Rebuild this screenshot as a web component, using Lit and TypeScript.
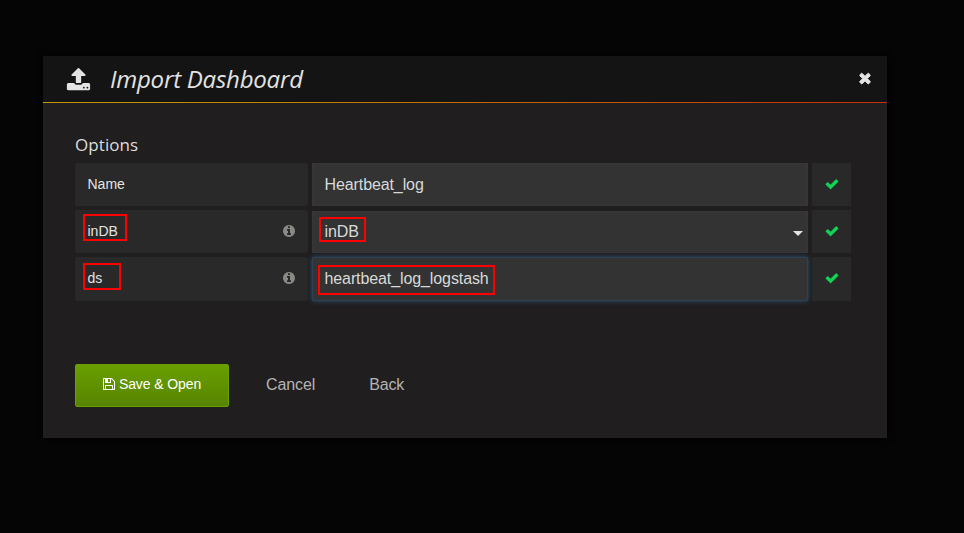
import { LitElement, html, css, svg, nothing } from "lit";
import { customElement, property } from "lit/decorators.js";

const ICONS: Record<string, string> = {
  upload:
    "M1344 1472q0-26-19-45t-45-19-45 19-19 45 19 45 45 19 45-19 19-45zm256 0q0-26-19-45t-45-19-45 19-19 45 19 45 45 19 45-19 19-45zm128-224v320q0 40-28 68t-68 28h-1472q-40 0-68-28t-28-68v-320q0-40 28-68t68-28h427q21 56 70.5 92t110.5 36h256q61 0 110.5-36t70.5-92h427q40 0 68 28t28 68zm-325-648q-17 40-59 40h-256v448q0 26-19 45t-45 19h-256q-26 0-45-19t-19-45v-448h-256q-42 0-59-40-17-39 14-69l448-448q18-19 45-19t45 19l448 448q31 30 14 69z",
  save:
    "M512 1536h768v-384h-768v384zm896 0h128v-896q0-14-10-38.5t-20-34.5l-281-281q-10-10-34-20t-39-10v416q0 40-28 68t-68 28h-576q-40 0-68-28t-28-68v-416h-128v1280h128v-416q0-40 28-68t68-28h832q40 0 68 28t28 68v416zm-384-928v-320q0-13-9.5-22.5t-22.5-9.5h-192q-13 0-22.5 9.5t-9.5 22.5v320q0 13 9.5 22.5t22.5 9.5h192q13 0 22.5-9.5t9.5-22.5zm640 32v928q0 40-28 68t-68 28h-1344q-40 0-68-28t-28-68v-1344q0-40 28-68t68-28h928q40 0 88 20t76 48l280 280q28 28 48 76t20 88z",
  info:
    "M1152 1376v-160q0-14-9-23t-23-9h-96v-512q0-14-9-23t-23-9h-320q-14 0-23 9t-9 23v160q0 14 9 23t23 9h96v320h-96q-14 0-23 9t-9 23v160q0 14 9 23t23 9h448q14 0 23-9t9-23zm-128-896v-160q0-14-9-23t-23-9h-192q-14 0-23 9t-9 23v160q0 14 9 23t23 9h192q14 0 23-9t9-23zm640 416q0 209-103 385.5t-279.5 279.5-385.5 103-385.5-103-279.5-279.5-103-385.5 103-385.5 279.5-279.5 385.5-103 385.5 103 279.5 279.5 103 385.5z",
  check:
    "M1671 566q0 40-28 68l-724 724-136 136q-28 28-68 28t-68-28l-136-136-362-362q-28-28-28-68t28-68l136-136q28-28 68-28t68 28l294 295 656-657q28-28 68-28t68 28l136 136q28 28 28 68z",
  times:
    "M1490 1322q0 40-28 68l-136 136q-28 28-68 28t-68-28l-294-294-294 294q-28 28-68 28t-68-28l-136-136q-28-28-28-68t28-68l294-294-294-294q-28-28-28-68t28-68l136-136q28-28 68-28t68 28l294 294 294-294q28-28 68-28t68 28l136 136q28 28 28 68t-28 68l-294 294 294 294q28 28 28 68z",
};

@customElement("ui-icon")
class UiIcon extends LitElement {
  @property() name = "check";

  static styles = css`
    :host {
      display: block;
      flex: none;
      width: 14px;
      height: 14px;
    }
    .glyph {
      display: block;
      width: 100%;
      height: 100%;
      fill: currentColor;
      stroke: currentColor;
      stroke-width: var(--icon-stroke, 0);
      overflow: visible;
    }
  `;

  render() {
    return html`<svg class="glyph" viewBox="0 0 1792 1792">
      ${svg`<path d=${ICONS[this.name]}></path>`}
    </svg>`;
  }
}

@customElement("option-row")
class OptionRow extends LitElement {
  @property() label = "";
  @property() value = "";
  @property() kind = "text";
  @property({ type: Boolean }) hint = false;
  @property({ type: Boolean }) marked = false;

  static styles = css`
    :host {
      display: grid;
      grid-template-columns: 233px 496px 39px;
      column-gap: 4px;
      height: 43px;
      font-family: "Liberation Sans", Arial, sans-serif;
    }
    .label,
    .field,
    .status {
      position: relative;
      display: flex;
      align-items: center;
      box-sizing: border-box;
      border-radius: 2px;
    }
    .label {
      justify-content: space-between;
      padding: 0 12px var(--row-lift, 1px) 12.5px;
      background: #292929;
      color: #e3e3e3;
      font-size: 14px;
    }
    .label ui-icon {
      color: #8a8986;
    }
    .field {
      justify-content: space-between;
      padding: 1px 5px 0 12.5px;
      background: #333;
      color: #d8d9da;
      font-size: 16px;
      letter-spacing: -0.1px;
      border-radius: 0;
      box-shadow: inset 0 0 3px 1px #393939;
    }
    .select {
      margin-top: 1px;
      padding: 0 5px 1px 12.5px;
    }
    .focus {
      padding: 0 5px 1px 12.5px;
      border-radius: 2px;
      box-shadow: inset 0 0 0 1px #2c4254, 0 0 5px #2f5478;
    }
    .caret {
      width: 0;
      border: 5px solid transparent;
      border-top-color: #e3e3e3;
      border-bottom: 0;
      margin-top: 3px;
    }
    .status {
      justify-content: center;
      padding-bottom: var(--row-lift, 1px);
      background: #292929;
      color: #10d658;
      border-radius: 0;
      --icon-stroke: 70;
    }
    .mark {
      position: absolute;
      box-sizing: border-box;
      border: 2px solid #f00;
    }
    .label-indb { left: 8px; top: 4px; width: 44px; height: 27px; }
    .field-indb { left: 7px; top: 6px; width: 47px; height: 25px; }
    .label-ds { left: 8px; top: 6px; width: 38px; height: 27px; }
    .field-ds { left: 6px; top: 8px; width: 177px; height: 30px; }
  `;

  render() {
    const key = this.label.toLowerCase();
    return html`
      <div class="label">
        <span>${this.label}</span>
        ${this.hint ? html`<ui-icon name="info"></ui-icon>` : nothing}
        ${this.marked ? html`<i class="mark label-${key}"></i>` : nothing}
      </div>
      <div class="field ${this.kind}">
        <span>${this.value}</span>
        ${this.kind === "select" ? html`<i class="caret"></i>` : nothing}
        ${this.marked ? html`<i class="mark field-${key}"></i>` : nothing}
      </div>
      <div class="status"><ui-icon name="check"></ui-icon></div>
    `;
  }
}

@customElement("app-root")
class AppRoot extends LitElement {
  static styles = css`
    :host {
      display: block;
      box-sizing: border-box;
      height: 533px;
      padding: 56px 0 0 43px;
      overflow: hidden;
      background: #050505;
      font-family: "Liberation Sans", Arial, sans-serif;
    }
    .modal {
      width: 844px;
      height: 382px;
      background: #201e1f;
      box-shadow: 0 0 6px #000;
    }
    .header {
      display: flex;
      align-items: center;
      box-sizing: border-box;
      height: 46px;
      padding: 0 14px 0 22.5px;
      background: #141414;
      color: #e3e3e3;
    }
    .upload {
      width: 25px;
      height: 25px;
    }
    .title {
      flex: 1;
      margin: 0 0 0 19.5px;
      font: italic 430 24px/46px "Open Sans", "Noto Sans", sans-serif;
      letter-spacing: -0.23px;
    }
    .close {
      width: 16px;
      height: 16px;
      margin-bottom: 2px;
      --icon-stroke: 90;
    }
    .rule {
      height: 1px;
      background: linear-gradient(to right, #c09c06, #c27d05 35%, #c4310a 99%);
    }
    .content {
      padding: 30px 32px 0;
    }
    .heading {
      margin: 0;
      color: #dcdddd;
      font: 450 17px/24px "Open Sans", "Noto Sans", sans-serif;
      letter-spacing: 0.08px;
    }
    .rows {
      display: grid;
      row-gap: 4px;
      padding-top: 6px;
    }
    .last {
      height: 44px;
      --row-lift: 2px;
    }
    .actions {
      display: flex;
      align-items: center;
      margin-top: 63px;
      height: 43px;
      color: #b3b3b3;
      font-size: 16px;
    }
    .save {
      display: flex;
      align-items: center;
      justify-content: center;
      gap: 3px;
      box-sizing: border-box;
      width: 154px;
      height: 43px;
      padding: 0 1px 3px 0;
      border: 1px solid #69a000;
      border-radius: 2px;
      background: linear-gradient(#699f00, #578400);
      color: #fff;
      font-size: 14px;
      letter-spacing: -0.1px;
    }
    .cancel {
      margin-left: 37px;
      padding-bottom: 2px;
      letter-spacing: -0.1px;
    }
    .back {
      margin-left: 54px;
      padding-bottom: 2px;
      letter-spacing: -0.15px;
    }
  `;

  render() {
    return html`
      <div class="modal">
        <div class="header">
          <ui-icon class="upload" name="upload"></ui-icon>
          <h2 class="title">Import Dashboard</h2>
          <ui-icon class="close" name="times"></ui-icon>
        </div>
        <div class="rule"></div>
        <div class="content">
          <h3 class="heading">Options</h3>
          <div class="rows">
            <option-row label="Name" value="Heartbeat_log"></option-row>
            <option-row label="inDB" value="inDB" kind="select" hint marked></option-row>
            <option-row class="last" label="ds" value="heartbeat_log_logstash" kind="focus" hint marked></option-row>
          </div>
          <div class="actions">
            <div class="save"><ui-icon name="save"></ui-icon><span>Save &amp; Open</span></div>
            <span class="cancel">Cancel</span>
            <span class="back">Back</span>
          </div>
        </div>
      </div>
    `;
  }
}
